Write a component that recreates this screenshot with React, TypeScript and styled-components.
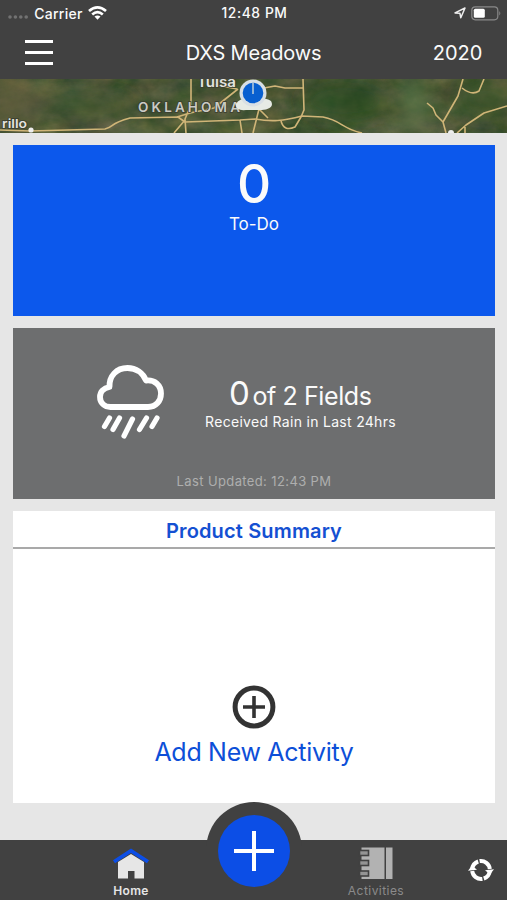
import React from "react";
import styled, { createGlobalStyle } from "styled-components";

const Global = createGlobalStyle`
  * { box-sizing: border-box; }
  body { margin: 0; background: #e6e6e6; font-family: Inter, "Liberation Sans", sans-serif; }
  svg { display: block; }
`;

const Screen = styled.div`
  width: 507px;
  height: 900px;
  display: flex;
  flex-direction: column;
  overflow: hidden;
  background: #e6e6e6;
`;

const Line = styled.svg`
  flex: none;
  overflow: visible;
`;

const StatusBar = styled.div`
  height: 26px;
  flex: none;
  display: grid;
  grid-template-columns: 1fr auto 1fr;
  align-items: center;
  padding: 0 6px 0 8px;
  background: #414141;
  color: #f2f2f2;
`;

const StatusSide = styled.div<{ $end?: boolean }>`
  display: flex;
  align-items: center;
  gap: 5px;
  justify-content: ${(p) => (p.$end ? "flex-end" : "flex-start")};
`;

const Label = styled.span<{
  $size: number;
  $width: number;
  $weight?: number;
  $color?: string;
  $height?: number;
  $track?: number;
}>`
  display: flex;
  justify-content: center;
  flex: none;
  white-space: nowrap;
  width: ${(p) => p.$width}px;
  font-size: ${(p) => p.$size}px;
  font-weight: ${(p) => p.$weight ?? 400};
  letter-spacing: ${(p) => p.$track ?? 0}px;
  line-height: ${(p) => p.$height ?? Math.round(p.$size * 1.2)}px;
  color: ${(p) => p.$color ?? "#fafafa"};
`;

const NavBar = styled.header`
  height: 53px;
  flex: none;
  display: grid;
  grid-template-columns: 1fr auto 1fr;
  align-items: center;
  padding: 0 25px;
  background: #414141;
`;

const MenuButton = styled.button`
  width: 28px;
  height: 25px;
  padding: 0;
  border: 0;
  background: none;
  display: flex;
  flex-direction: column;
  justify-content: space-between;
`;

const MenuBar = styled.span`
  width: 28px;
  height: 3px;
  background: #fff;
`;

const End = styled.div`
  display: flex;
  justify-content: flex-end;
`;

const MapStrip = styled.div`
  height: 54px;
  flex: none;
  overflow: hidden;
`;

const Content = styled.main`
  height: 707px;
  flex: none;
  padding: 12px 12px 0 13px;
  display: flex;
  flex-direction: column;
  gap: 12px;
`;

const TodoCard = styled.section`
  height: 171px;
  flex: none;
  display: flex;
  flex-direction: column;
  align-items: center;
  padding-top: 11px;
  background: #0c58ec;
`;

const RainCard = styled.section`
  height: 171px;
  flex: none;
  display: flex;
  flex-direction: column;
  align-items: center;
  background: #6d6e6f;
`;

const RainBody = styled.div`
  align-self: stretch;
  height: 144px;
  display: flex;
  align-items: flex-start;
  padding: 36px 0 0 83px;
  gap: 40px;
`;

const RainText = styled.div`
  display: flex;
  flex-direction: column;
  align-items: center;
  padding-top: 8px;
`;

const RainCount = styled.div`
  display: flex;
  align-items: baseline;
  gap: 3px;
  height: 42px;
`;

const SummaryCard = styled.section`
  height: 292px;
  flex: none;
  display: flex;
  flex-direction: column;
  align-items: center;
  background: #fff;
`;

const SummaryTitle = styled.h2`
  margin: 0;
  width: 100%;
  height: 38px;
  padding-top: 3px;
  display: flex;
  align-items: center;
  justify-content: center;
  border-bottom: 2px solid #a9a9a9;
`;

const AddActivity = styled.button`
  margin-top: 136px;
  padding: 0;
  border: 0;
  background: none;
  font-family: inherit;
  display: flex;
  flex-direction: column;
  align-items: center;
  gap: 8px;
`;

const TabBar = styled.nav`
  height: 60px;
  flex: none;
  position: relative;
  display: grid;
  grid-template-columns: 206px 96px 148px 57px;
  background: #414141;
`;

const Tab = styled.div<{ $shift?: number }>`
  display: flex;
  flex-direction: column;
  align-items: center;
  padding-top: 7px;
  padding-left: ${(p) => p.$shift ?? 0}px;
  gap: 3px;
`;

const Fab = styled.button`
  position: absolute;
  left: 206px;
  top: -38px;
  width: 96px;
  height: 98px;
  padding: 13px 0 0;
  border: 0;
  border-radius: 48px 48px 0 0;
  background: #414141;
  display: flex;
  justify-content: center;
  align-items: flex-start;
`;

const FabDisc = styled.span`
  width: 72px;
  height: 72px;
  border-radius: 50%;
  background: #0c4ee6;
  display: grid;
  place-items: center;
`;

const Sync = styled.div`
  padding: 18px 0 0 18px;
`;

function SatelliteMap() {
  return (
    <svg width="507" height="54" viewBox="0 0 507 54">
      <defs>
        <filter id="terrain" x="0" y="0" width="100%" height="100%" colorInterpolationFilters="sRGB">
          <feTurbulence type="fractalNoise" baseFrequency="0.035 0.05" numOctaves="5" seed="8" />
          <feColorMatrix values="0.45 0 0 0 0.09  0.25 0.12 0 0 0.17  0.22 0 0.12 0 0.06  0 0 0 0 1" />
        </filter>
        <filter id="soft" x="-50%" y="-50%" width="200%" height="200%">
          <feGaussianBlur stdDeviation="9" />
        </filter>
      </defs>
      <rect width="507" height="54" fill="#47552f" />
      <rect width="507" height="54" filter="url(#terrain)" opacity="0.7" />
      <g filter="url(#soft)" opacity="0.6">
        <ellipse cx="345" cy="22" rx="46" ry="22" fill="#244a1a" />
        <ellipse cx="80" cy="25" rx="55" ry="12" fill="#3f5430" />
        <ellipse cx="12" cy="25" rx="26" ry="25" fill="#655b40" />
        <ellipse cx="415" cy="28" rx="15" ry="30" fill="#5d7a4c" />
        <ellipse cx="485" cy="20" rx="30" ry="20" fill="#395226" />
      </g>
      <g fill="none" stroke="#d0b578" strokeWidth="1.6" strokeLinejoin="round">
        <path d="M0 51 L30 52 L105 50 C116 47 108 45 130 39 L178 38 L185 43 L240 41 L255 40 C272 43 283 42 302 37 L323 38 C343 42 340 49 362 54" />
        <path d="M191 0 V26 L185 40 L186 54 M185 41 L174 54 M177 38 L190 34 L214 29 L238 10 M212 5 L237 10 M240 41 L242 54 M253 54 L259 30 L268 39 M264 9 L275 7 L285 9 L303 9 M303 0 L304 31 L301 38 L295 48 Q284 53 281 42" />
        <path d="M463 0 L458 17 L443 43 L446 54 M427 24 L433 29 L436 36 L443 43 M462 9 Q472 17 479 12 L484 0 M457 54 L466 46 L484 34 L507 27 M465 48 V54" />
      </g>
      <circle cx="31" cy="51" r="2.6" fill="#eee" />
      <circle cx="451" cy="54" r="3" fill="#eee" />
      <g fontFamily="Inter, sans-serif" fill="#e3e3df" stroke="#3a3e30" strokeWidth="1.6" paintOrder="stroke" fontWeight="600">
        <text x="197" y="8" fontSize="13" textLength="39" lengthAdjust="spacingAndGlyphs">Tulsa</text>
        <text x="2" y="49" fontSize="12" textLength="25" lengthAdjust="spacingAndGlyphs">rillo</text>
        <text x="138" y="33" fontSize="13.5" fill="#cacbc4" textLength="102">OKLAHOMA</text>
      </g>
      <path d="M236 25 Q240 18 253 20 Q265 18 271 22 C275 29 266 31 260 31 H246 Q235 32 236 25 Z" fill="#e6eae5" />
      <circle cx="253" cy="14" r="13.5" fill="#d8dfe5" />
      <circle cx="253" cy="14" r="10.3" fill="#085fd0" />
      <path d="M253 4 V15" stroke="#8fb2d8" strokeWidth="2" />
    </svg>
  );
}

function Signal() {
  return (
    <Line width="21" height="14" viewBox="0 0 21 14">
      {[2, 7.4, 12.8, 18.2].map((x) => (
        <circle key={x} cx={x} cy="11" r="1.8" fill="#727272" />
      ))}
    </Line>
  );
}

function Wifi() {
  return (
    <Line width="19" height="14" viewBox="0 0 19 14">
      <g fill="none" stroke="#fff" strokeWidth="2.7">
        <path d="M1 5.1 Q9.5 -2.2 18 5.1" />
        <path d="M4.2 8.5 Q9.5 3.9 14.8 8.5" />
      </g>
      <path d="M6.5 10.6 Q9.5 8.3 12.5 10.6 L9.5 13.8 Z" fill="#fff" />
    </Line>
  );
}

function LocationArrow() {
  return (
    <Line width="12" height="12" viewBox="0 0 12 12">
      <path d="M1 5.9 L11 1 L6.8 10.8 L5.9 6.2 Z" fill="none" stroke="#eee" strokeWidth="1.5" strokeLinejoin="round" />
    </Line>
  );
}

function Battery() {
  return (
    <Line width="30" height="15" viewBox="0 0 30 15">
      <rect x="0.8" y="0.8" width="26" height="13" rx="3.5" fill="none" stroke="#898989" strokeWidth="1.2" />
      <rect x="2.8" y="2.8" width="11" height="9" rx="1.5" fill="#fff" />
      <path d="M28.3 5 Q30.3 7.3 28.3 9.6 Z" fill="#898989" />
    </Line>
  );
}

function RainCloud() {
  return (
    <Line width="69" height="76" viewBox="0 0 69 76">
      <path
        d="M14.5 43 H52 C60 43 65 37 65 29.5 C65 21 58.5 15.5 50 16.5 C47 9 40 4 31.5 4 C20.5 4 13 12 13.5 23 C7.5 24 4 28 4 33 C4 39 8.5 43 14.5 43 Z"
        fill="none" stroke="#fff" strokeWidth="5.8" strokeLinejoin="round"
      />
      <path
        d="M13.5 54 L8.5 62.5 M23.5 54 L17 65.5 M36.5 55 L28 72 M50.5 54 L43.5 65.5 M61 54 L56 62.5"
        stroke="#fff" strokeWidth="5.2" strokeLinecap="round"
      />
    </Line>
  );
}

function PlusCircle() {
  return (
    <Line width="44" height="44" viewBox="0 0 44 44">
      <circle cx="22" cy="22" r="18.9" fill="none" stroke="#333" strokeWidth="5" />
      <path d="M22 11 V33 M11 22 H33" stroke="#333" strokeWidth="3.6" />
    </Line>
  );
}

function House() {
  return (
    <Line width="36" height="33" viewBox="0 0 36 33">
      <path d="M5 15 L18 7 L31 15 V31.5 H21.5 V24 H15 V31.5 H5 Z" fill="#e6e6e6" />
      <path d="M1 14.8 L18 3.6 L35 14.8" fill="none" stroke="#0c4ee6" strokeWidth="3.7" />
    </Line>
  );
}

function Notebook() {
  return (
    <Line width="34" height="33" viewBox="0 0 34 33">
      <path d="M2.5 0.5 H25.5 V32 H2.5 Z M27 0.5 H33.5 V32 H27 Z" fill="#b2b2b2" />
      {[3.5, 13.5, 24].map((y) => (
        <rect key={y} x="0.5" y={y} width="9" height="5" fill="#949494" stroke="#414141" strokeWidth="1.6" />
      ))}
    </Line>
  );
}

function SyncIcon() {
  return (
    <Line width="26" height="24" viewBox="0 0 26 24">
      <path
        d="M4.2 11 A9 9 0 0 1 10.2 3.5 M11.6 3.1 A9 9 0 0 1 21.8 11 M21.8 13 A9 9 0 0 1 15.8 20.5 M14.4 20.9 A9 9 0 0 1 4.2 13"
        fill="none" stroke="#fff" strokeWidth="4"
      />
      <path d="M0 12.8 L4 7.5 L9 11.8 Z M17 12.2 L26 11.2 L22 16.5 Z" fill="#fff" />
    </Line>
  );
}

export default function App() {
  return (
    <>
      <Global />
      <Screen>
        <StatusBar>
          <StatusSide>
            <Signal />
            <Label $size={14} $width={49} $weight={500} $track={0.3}>Carrier</Label>
            <Wifi />
          </StatusSide>
          <Label $size={13.8} $width={67} $weight={500} $track={0.6}>12:48 PM</Label>
          <StatusSide $end>
            <LocationArrow />
            <Battery />
          </StatusSide>
        </StatusBar>
        <NavBar>
          <MenuButton aria-label="Menu">
            <MenuBar />
            <MenuBar />
            <MenuBar />
          </MenuButton>
          <Label $size={20} $width={136} $track={-0.18}>DXS Meadows</Label>
          <End>
            <Label $size={20} $width={49}>2020</Label>
          </End>
        </NavBar>
        <MapStrip>
          <SatelliteMap />
        </MapStrip>
        <Content>
          <TodoCard>
            <Label $size={53} $width={40} $weight={500} $height={56}>0</Label>
            <Label $size={17} $width={50} $height={25}>To-Do</Label>
          </TodoCard>
          <RainCard>
            <RainBody>
              <RainCloud />
              <RainText>
                <RainCount>
                  <Label $size={33} $width={20} $height={42}>0</Label>
                  <Label $size={25} $width={119} $height={42} $track={-0.4}>of 2 Fields</Label>
                </RainCount>
                <Label $size={14} $width={191} $height={16} $track={0.3}>Received Rain in Last 24hrs</Label>
              </RainText>
            </RainBody>
            <Label $size={13} $width={155} $color="#aeaeae" $height={18} $track={0.38}>Last Updated: 12:43 PM</Label>
          </RainCard>
          <SummaryCard>
            <SummaryTitle>
              <Label $size={20} $width={177} $weight={600} $color="#1450d2" $track={0.15}>Product Summary</Label>
            </SummaryTitle>
            <AddActivity>
              <PlusCircle />
              <Label $size={25} $width={200} $color="#0d4fd8" $height={30} $track={-0.3}>Add New Activity</Label>
            </AddActivity>
          </SummaryCard>
        </Content>
        <TabBar>
          <Tab $shift={56}>
            <House />
            <Label $size={12} $width={36} $weight={600} $color="#e6e6e6" $height={16} $track={0.3}>Home</Label>
          </Tab>
          <Fab aria-label="Add">
            <FabDisc>
              <Line width="40" height="40" viewBox="0 0 40 40">
                <path d="M20 0 V40 M0 20 H40" stroke="#fff" strokeWidth="4" />
              </Line>
            </FabDisc>
          </Fab>
          <span />
          <Tab>
            <Notebook />
            <Label $size={12} $width={56} $color="#8b8b8b" $height={16} $track={0.45}>Activities</Label>
          </Tab>
          <Sync>
            <SyncIcon />
          </Sync>
        </TabBar>
      </Screen>
    </>
  );
}
